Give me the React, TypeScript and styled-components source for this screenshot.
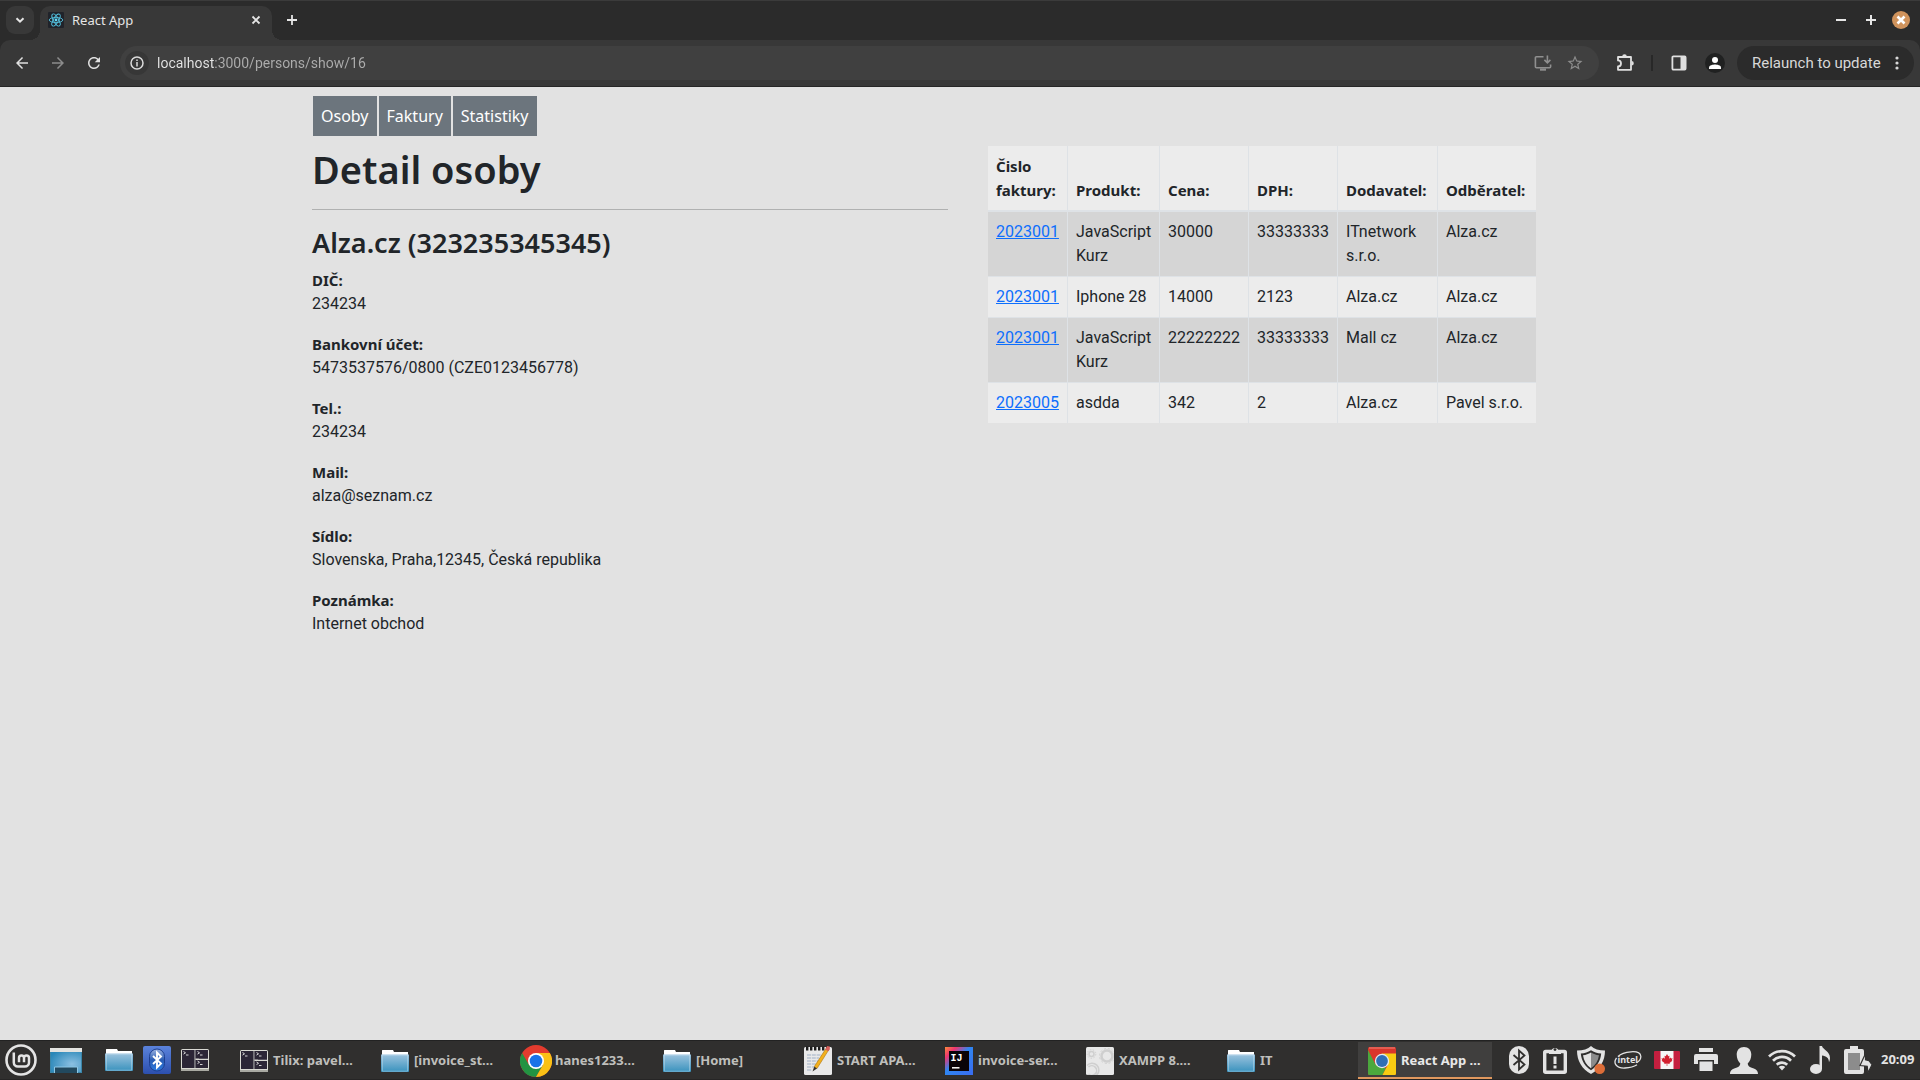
import React from 'react';
import styled, { createGlobalStyle, css } from 'styled-components';

const UI = '"Noto Sans", "Open Sans", sans-serif';
const BODY = 'Roboto, "Noto Sans", sans-serif';

const GlobalStyle = createGlobalStyle`
  *, *::before, *::after { box-sizing: border-box; }
  body { margin: 0; background: #e2e2e2; }
  button { font: inherit; color: inherit; border: 0; padding: 0; background: none; cursor: pointer; }
  svg { display: block; flex: none; }
`;

const Desktop = styled.div`
  display: flex;
  flex-direction: column;
  height: 100vh;
  overflow: hidden;
  font-family: ${BODY};
`;

/* ---------- browser frame ---------- */

const TabStrip = styled.header`
  display: flex;
  align-items: flex-start;
  flex: none;
  height: 40px;
  padding: 5px 10px 0 6px;
  background: #2b2b2b;
  border-top: 1px solid #3b3b3b;
  color: #e6e6e6;
  font: 400 13px/16px ${UI};
`;

const TabSearch = styled.button`
  display: grid;
  place-items: center;
  width: 28px;
  height: 28px;
  margin-right: 6px;
  border-radius: 9px;
  background: #383838;
`;

const Tab = styled.div`
  position: relative;
  display: flex;
  align-items: center;
  width: 232px;
  height: 34px;
  padding: 0 8px 6px;
  border-radius: 10px 10px 0 0;
  background: #383838;

  &::before, &::after {
    content: '';
    position: absolute;
    bottom: 0;
    width: 10px;
    height: 10px;
  }
  &::before { right: 100%; background: radial-gradient(circle at 0 0, transparent 10px, #383838 10px); }
  &::after { left: 100%; background: radial-gradient(circle at 100% 0, transparent 10px, #383838 10px); }
`;

const TabTitle = styled.span`
  flex: 1;
  margin-left: 8px;
`;

const StripButton = styled.button<{ $size?: number }>`
  display: grid;
  place-items: center;
  width: ${p => p.$size ?? 28}px;
  height: ${p => p.$size ?? 28}px;
`;

const NewTab = styled(StripButton)`
  margin-left: 6px;
`;

const WindowControls = styled.div`
  display: flex;
  align-items: center;
  gap: 12px;
  height: 28px;
  margin-left: auto;
`;

const Toolbar = styled.div`
  display: flex;
  align-items: center;
  flex: none;
  height: 47px;
  padding: 0 6px;
  background: #383838;
  border-bottom: 1px solid #262626;
  border-radius: 10px 10px 0 0;
  color: #dedede;
`;

const ToolbarWrap = styled.div`
  flex: none;
  background: #2b2b2b;
`;

const NavButtons = styled.div`
  display: flex;
  gap: 4px;
  margin-right: 10px;
`;

const ToolButton = styled.button<{ $dim?: boolean }>`
  display: grid;
  place-items: center;
  width: 32px;
  height: 32px;
  color: ${p => (p.$dim ? '#8c8c8c' : '#e0e0e0')};
`;

const AddressBar = styled.form`
  display: flex;
  align-items: center;
  flex: 1;
  height: 34px;
  padding: 0 8px 0 5px;
  margin-right: 10px;
  border-radius: 17px;
  background: #404040;
`;

const SiteInfo = styled.button`
  display: grid;
  place-items: center;
  width: 24px;
  height: 24px;
  border-radius: 50%;
  background: #373737;
`;

const Address = styled.input`
  flex: 1;
  min-width: 0;
  height: 24px;
  margin-left: 8px;
  padding: 0;
  border: 0;
  outline: 0;
  font: 400 14px/24px ${BODY};
  color: transparent;
  background: linear-gradient(to right, #e6e6e6 58px, #adadad 58px);
  background-clip: text;
`;

const Divider = styled.span`
  width: 2px;
  height: 16px;
  margin: 0 10px;
  background: #282828;
`;

const Avatar = styled.button`
  display: grid;
  place-items: center;
  width: 20px;
  height: 20px;
  margin: 0 12px 0 10px;
  border-radius: 50%;
  background: #202121;
  color: #fff;
`;

const Relaunch = styled.button`
  display: flex;
  align-items: center;
  justify-content: space-between;
  width: 177px;
  height: 34px;
  padding: 0 15px;
  border-radius: 17px;
  background: #2b2b2b;
  color: #d8d8d8;
  font: 400 15px/20px ${BODY};
`;

/* ---------- page ---------- */

const Viewport = styled.main`
  flex: 1;
  min-height: 0;
  overflow: auto;
  background: #e2e2e2;
  color: #212529;
  font: 400 16px/24px ${BODY};
`;

const Container = styled.div`
  max-width: 1320px;
  margin: 0 auto;
  padding: 8px 12px;
`;

const Menu = styled.ul`
  display: flex;
  gap: 2px;
  margin: 0 0 8px;
  padding: 1px;
  list-style: none;
`;

const MenuLink = styled.a`
  display: block;
  padding: 8px;
  background: #6c757d;
  color: #fff;
  font-family: ${UI};
  text-decoration: none;
`;

const Columns = styled.div`
  display: grid;
  grid-template-columns: 1fr 1fr;
  gap: 24px;
`;

const Title = styled.h1`
  margin: 0;
  font: 600 38px/48px ${UI};
`;

const Rule = styled.hr`
  margin: 16px 0;
  border: 0;
  border-top: 1px solid #b0b1b1;
`;

const Subtitle = styled.h3`
  margin: 0 0 8px;
  font: 600 27px/34px ${UI};
`;

const Details = styled.dl`
  margin: 0;
`;

const Term = styled.dt`
  font: 700 15px/24px ${UI};
`;

const Value = styled.dd`
  margin: 0 0 16px;
`;

const TablePane = styled.div`
  padding: 1px 0 0 16px;
`;

const Invoices = styled.table`
  table-layout: fixed;
  width: 548px;
  border-spacing: 0;
`;

const cell = css`
  padding: 8px;
  border-right: 1px solid #dee2e6;
  text-align: left;
  &:last-child { border-right: 0; }
`;

const HeadCell = styled.th`
  ${cell}
  border-bottom: 2px solid #dee2e6;
  background: #ececec;
  vertical-align: bottom;
  font: 700 15px/24px ${UI};
`;

const Cell = styled.td`
  ${cell}
  border-bottom: 1px solid #dee2e6;
  vertical-align: top;
`;

const Row = styled.tr`
  background: #ececec;
  &:nth-child(odd) { background: #d5d5d5; }
  &:last-child ${Cell} { border-bottom: 0; }
`;

const InvoiceLink = styled.a`
  color: #0d6efd;
  text-decoration: underline;
`;

/* ---------- taskbar ---------- */

const Taskbar = styled.footer`
  display: flex;
  flex: none;
  height: 40px;
  background: #302f2e;
  border-top: 1px solid #222;
  border-bottom: 1px solid #262525;
  color: #bfbfbc;
  font: 700 13px/18px ${UI};
`;

const Launchers = styled.nav`
  display: flex;
  margin-right: 16px;
`;

const Launcher = styled.button<{ $w?: number; $gap?: number }>`
  display: grid;
  place-items: center;
  width: ${p => p.$w ?? 38}px;
  margin-right: ${p => p.$gap ?? 0}px;
`;

const TaskList = styled.div`
  display: flex;
  flex: 1;
  gap: 7px;
  min-width: 0;
`;

const Task = styled.button<{ $active?: boolean }>`
  display: flex;
  align-items: center;
  gap: 5px;
  width: 134px;
  margin-top: 1px;
  padding: 0 10px;
  white-space: nowrap;
  ${p => p.$active && css`
    color: #e8e8e8;
    background: #403f3e;
    box-shadow: inset 0 -2px #e0985e;
  `}
`;

const TaskIcon = styled.span`
  display: flex;
  justify-content: center;
  flex: none;
  width: 28px;
`;

const TaskLabel = styled.span`
  padding-bottom: 2px;
`;

const Tray = styled.div`
  display: flex;
  align-items: center;
  padding-right: 3px;
  color: #e3e3e3;
`;

const TrayButton = styled.button<{ $w: number }>`
  display: grid;
  place-items: center;
  width: ${p => p.$w}px;
  height: 38px;
`;

const Clock = styled.time`
  margin-left: 4px;
  width: 36px;
  padding-bottom: 2px;
`;

/* ---------- icons ---------- */

const Glyph = ({ d, size = 18 }: { d: string; size?: number }) => (
  <svg width={size} height={size} viewBox="0 0 24 24" fill="currentColor"><path d={d} /></svg>
);

const BACK = 'M20 11H7.83l5.59-5.59L12 4l-8 8 8 8 1.41-1.41L7.83 13H20z';
const FORWARD = 'M12 4l-1.41 1.41L16.17 11H4v2h12.17l-5.58 5.59L12 20l8-8z';
const RELOAD = 'M17.65 6.35C16.2 4.9 14.21 4 12 4c-4.42 0-7.99 3.58-7.99 8s3.57 8 7.99 8c3.73 0 6.84-2.55 7.73-6h-2.08c-.82 2.33-3.04 4-5.65 4-3.31 0-6-2.69-6-6s2.69-6 6-6c1.66 0 3.14.69 4.22 1.78L13 11h7V4z';
const STAR = 'M22 9.24l-7.19-.62L12 2 9.19 8.63 2 9.24l5.46 4.73L5.82 21 12 17.27 18.18 21l-1.63-7.03zM12 15.4l-3.76 2.27 1-4.28-3.32-2.88 4.38-.38L12 6.1l1.71 4.04 4.38.38-3.32 2.88 1 4.28z';

const Line = ({ d, size, w = 2 }: { d: string; size: number; w?: number }) => (
  <svg width={size} height={size} viewBox={`0 0 ${size} ${size}`} fill="none" stroke="currentColor" strokeWidth={w}><path d={d} /></svg>
);

const ReactLogo = () => (
  <svg width="16" height="16" viewBox="0 0 16 16">
    <rect width="16" height="16" rx="1" fill="#20232a" />
    <g fill="none" stroke="#53c1de" strokeWidth="0.9">
      <ellipse cx="8" cy="8" rx="6.8" ry="2.6" />
      <ellipse cx="8" cy="8" rx="6.8" ry="2.6" transform="rotate(60 8 8)" />
      <ellipse cx="8" cy="8" rx="6.8" ry="2.6" transform="rotate(120 8 8)" />
    </g>
    <circle cx="8" cy="8" r="1.4" fill="#61dafb" />
  </svg>
);

const CloseWindowIcon = () => (
  <svg width="18" height="18" viewBox="0 0 18 18">
    <circle cx="9" cy="9" r="9" fill="#d0935c" />
    <path d="M5.5 5.5l7 7M12.5 5.5l-7 7" stroke="#fff" strokeWidth="2.6" />
  </svg>
);

const InfoIcon = () => (
  <svg width="14" height="14" viewBox="0 0 14 14" fill="none" stroke="#dcdcdc" strokeWidth="1.5">
    <circle cx="7" cy="7" r="6" /><path d="M7 6v4.4M7 3.4v1.7" />
  </svg>
);

const InstallIcon = () => (
  <svg width="18" height="18" viewBox="0 0 18 18" fill="none" stroke="#8f8f8f" strokeWidth="1.6">
    <path d="M9.5 2.8H2.4a1 1 0 0 0-1 1v9a1 1 0 0 0 1 1h13.2a1 1 0 0 0 1-1v-2.3" />
    <path d="M13.4 1.6v7M10.4 5.9l3 3 3-3" />
    <path d="M6 15.6h6" strokeWidth="2.2" />
  </svg>
);

const PuzzleIcon = () => (
  <svg width="18" height="18" viewBox="0 0 18 18" fill="none" stroke="currentColor" strokeWidth="1.8" strokeLinejoin="round">
    <path d="M2 3H15V15.800H2V12.400a3 3 0 0 0 0-6z" />
    <path d="M6.200 2.500a2.300 2.300 0 0 1 4.600 0zM15.500 7a2.300 2.300 0 0 1 0 4.600z" fill="currentColor" stroke="none" />
  </svg>
);

const SidePanelIcon = () => (
  <svg width="16" height="16" viewBox="0 0 16 16">
    <rect x="1.4" y="1.4" width="13.2" height="13.2" rx="1" fill="none" stroke="currentColor" strokeWidth="1.8" />
    <path d="M9.5 1.5H14.5V14.5H9.5z" fill="currentColor" />
  </svg>
);

const PersonIcon = () => (
  <svg width="14" height="14" viewBox="0 0 14 14" fill="currentColor">
    <circle cx="7" cy="4" r="3" /><path d="M1 13v-1.5C1 9.4 5 8.6 7 8.6s6 .8 6 2.9V13z" />
  </svg>
);

const DotsIcon = () => (
  <svg width="4" height="14" viewBox="0 0 4 14" fill="currentColor">
    <circle cx="2" cy="2" r="1.6" /><circle cx="2" cy="7" r="1.6" /><circle cx="2" cy="12" r="1.6" />
  </svg>
);

const MintIcon = () => (
  <svg width="32" height="32" viewBox="0 0 32 32" fill="none" stroke="#e4e4e4">
    <circle cx="16" cy="16" r="14.5" strokeWidth="2.6" />
    <path d="M8.8 8.4V18.5a4 4 0 0 0 4 4H20a4 4 0 0 0 4-4V14a2.5 2.5 0 0 0-5 0V18.3M19 14a2.5 2.5 0 0 0-5 0V18.3" strokeWidth="2.5" />
  </svg>
);

const DesktopIcon = () => (
  <svg width="32" height="28" viewBox="0 0 32 28">
    <defs>
      <radialGradient id="desk" cx=".7" cy=".6" r=".8"><stop offset="0" stopColor="#8cc0e2" /><stop offset="1" stopColor="#2a87b8" /></radialGradient>
    </defs>
    <rect y="2" width="32" height="25" fill="#3b86a8" />
    <rect x="1" y="6" width="30" height="20" fill="url(#desk)" />
    <rect width="32" height="4" y="2" fill="#e3e3e0" />
    <path d="M4.500 27v-6h23v6" fill="#22495e" stroke="#8ec6e4" />
  </svg>
);

const FolderIcon = () => (
  <svg width="28" height="24" viewBox="0 0 28 24">
    <defs>
      <linearGradient id="fold" x1="0" y1="0" x2="0" y2="1"><stop offset="0" stopColor="#9cc3de" /><stop offset="1" stopColor="#3992bd" /></linearGradient>
    </defs>
    <path d="M1 6V1.5Q1 1 1.5 1H12l1 2h14V7H1z" fill="#fff" />
    <path d="M0 5.5h28V22a1 1 0 0 1-1 1H1a1 1 0 0 1-1-1z" fill="url(#fold)" />
    <path d="M1 6.2h26M1.5 6v16.2h25V6" stroke="#d0e6f2" strokeOpacity=".5" strokeWidth=".8" fill="none" />
  </svg>
);

const BluetoothApp = () => (
  <svg width="28" height="28" viewBox="0 0 28 28">
    <defs>
      <linearGradient id="bt" x1="0" y1="0" x2="0" y2="1"><stop offset="0" stopColor="#5b83dc" /><stop offset="1" stopColor="#2c4fae" /></linearGradient>
      <linearGradient id="bt2" x1="0" y1="0" x2="0" y2="1"><stop offset="0" stopColor="#9db4e0" /><stop offset=".5" stopColor="#2a5cb4" /><stop offset="1" stopColor="#2b7be0" /></linearGradient>
    </defs>
    <rect width="28" height="28" rx="2" fill="url(#bt)" />
    <rect x="6.5" y="3" width="15" height="22" rx="7.5" fill="url(#bt2)" stroke="#1d3f92" />
    <path d="M10 10l8 7.5-4 4V6.5l4 4-8 7.5" fill="none" stroke="#fff" strokeWidth="1.9" />
  </svg>
);

const TilixIcon = () => (
  <svg width="28" height="24" viewBox="0 0 28 24">
    <rect y="1" width="28" height="22" rx="1.5" fill="#d9d9d3" />
    <path d="M1 2h12.5v18H1zM18 2h9v8.5h-9zM18 12h9v8h-9z" fill="#2b2536" />
    <path d="M13 2h1.500v18H13z" fill="#77757c" />
    <path d="M14.500 2H27v8.500H14.500zM14.500 12H27v8H14.500z" fill="#2b2536" />
    <path d="M2.5 3.5l2 1.3-2 1.3M5 7h2.5M16.5 3.5l2 1.3-2 1.3M19 7h2.5M16.5 13l2 1.3-2 1.3M19 16.5h2.5" fill="none" stroke="#e8e8e8" strokeWidth=".9" />
    <path d="M0 21h28v2H0z" fill="#a9a9a2" />
  </svg>
);

const ChromeRound = () => (
  <svg width="32" height="32" viewBox="-16 -16 32 32">
    <circle r="16" fill="#e33b2e" />
    <path d="M-13.86 -8A16 16 0 0 0 0 16L6.93 4L0 0L-6.93 4z" fill="#229342" />
    <path d="M13.86 -8A16 16 0 0 1 0 16L6.93 4L0 -8z" fill="#fbc116" />
    <circle r="8" fill="#fff" /><circle r="6.3" fill="#1a73e8" />
  </svg>
);

const ChromeSquare = () => (
  <svg width="28" height="28" viewBox="0 0 28 28">
    <rect width="28" height="28" rx="1.5" fill="#d9362b" />
    <path d="M0 3L7.5 17.5 14 20l4 1-3.5 7H1.5A1.5 1.5 0 0 1 0 26.5z" fill="#4ba83d" />
    <path d="M14 6.5H28v20a1.5 1.5 0 0 1-1.5 1.5H14.5L20 17.5z" fill="#f8cc12" />
    <path d="M1 1h26" stroke="#ee8379" />
    <circle cx="14" cy="14" r="7.2" fill="#e6ecef" /><circle cx="14" cy="14" r="5.9" fill="#2f6fb5" />
  </svg>
);

const NotepadIcon = () => (
  <svg width="28" height="28" viewBox="0 0 28 28" overflow="visible">
    <rect width="28" height="28" rx="1.5" fill="#e9e9e9" />
    <path d="M2 1.5h24" stroke="#1c1c1c" strokeWidth="4" strokeDasharray="2.4 1.6" />
    <path d="M3 8h14M3 11h12M3 14h13M3 17h9M3 20h10M3 23h5" stroke="#9fb0c6" strokeWidth="1.1" strokeDasharray="4 .8" />
    <path d="M22 1.5l2.6 1.6L13 21.5l-2.8-1.7z" fill="#f3b01c" stroke="#a9720c" strokeWidth=".6" />
    <path d="M10.2 19.8L8.5 24.5l4.5-3z" fill="#35302b" />
    <path d="M21.2 2.5L23-1l2.8.5v3L24 4.3z" fill="#d7605c" />
  </svg>
);

const IdeaIcon = () => (
  <svg width="28" height="28" viewBox="0 0 28 28">
    <defs>
      <linearGradient id="ij" x1="0" y1="0" x2="1" y2="1"><stop offset="0" stopColor="#fd8b3a" /><stop offset=".2" stopColor="#f0356f" /><stop offset=".45" stopColor="#2f86f2" /><stop offset="1" stopColor="#3a6cf0" /></linearGradient>
    </defs>
    <rect width="28" height="28" fill="url(#ij)" />
    <rect x="4" y="4" width="20" height="20" fill="#0a0408" />
    <text x="5.5" y="14" fill="#fff" fontFamily="Liberation Mono" fontWeight="700" fontSize="10">IJ</text>
    <path d="M7 20.8h7.5" stroke="#fff" strokeWidth="1.5" />
  </svg>
);

const GearsIcon = () => (
  <svg width="28" height="28" viewBox="0 0 28 28" fill="none" stroke="#cfcfcf">
    <rect width="28" height="28" rx="1.5" fill="#e8e8e8" stroke="none" />
    <circle cx="21" cy="9" r="5.5" strokeWidth="2.5" /><circle cx="21" cy="9" r="7.5" strokeDasharray="2 2" />
    <circle cx="5.5" cy="7" r="2.5" strokeWidth="1.5" /><circle cx="5.5" cy="7" r="4.3" strokeDasharray="1.5 1.5" />
    <path d="M1 18.5a6.8 6.8 0 1 1 0 9M2.5 20a4.8 4.8 0 1 1 0 7" strokeWidth="1.5" />
  </svg>
);

const TrayBluetooth = () => (
  <svg width="20" height="28" viewBox="0 0 20 28">
    <rect width="20" height="28" rx="10" fill="currentColor" />
    <path d="M4.5 9l11 9.5L10 23.5V4.5l5.5 5L4.5 19" fill="none" stroke="#302f2e" strokeWidth="1.8" />
  </svg>
);

const ClipboardIcon = () => (
  <svg width="24" height="28" viewBox="0 0 24 28">
    <rect x="1.7" y="5.5" width="20.6" height="20.8" rx="1" fill="none" stroke="currentColor" strokeWidth="3.4" />
    <path d="M6 8V5.5h2.5a3.5 3.5 0 0 1 7 0H18V8z" fill="currentColor" />
    <circle cx="12" cy="3.6" r="1.4" fill="#302f2e" />
    <path d="M12 10.5v7.5M12 19.5v3" stroke="currentColor" strokeWidth="3" />
  </svg>
);

const ShieldIcon = () => (
  <svg width="28" height="28" viewBox="0 0 28 28">
    <path d="M14 0c3 3 8 4.500 14 4.500C28 15 23 23 14 28 5 23 0 15 0 4.500 6 4.500 11 3 14 0z" fill="currentColor" />
    <path d="M14 4.2c3 2 6 3 10.2 3.4C23.5 15 20 20.500 14 24.300 8 20.500 4.500 15 3.800 7.600 8 7.200 11 6.200 14 4.200z" fill="#302f2e" />
    <path d="M14 6.4c-2.5 1.5-5 2.4-8 2.8.8 5.8 3.5 10 8 13z" fill="currentColor" />
    <path d="M14 6.4c2.5 1.5 5 2.4 8 2.8-.8 5.8-3.5 10-8 13z" fill="#8b8b8b" />
    <circle cx="22.7" cy="22.7" r="5.3" fill="#dd6d38" />
  </svg>
);

const IntelIcon = () => (
  <svg width="28" height="20" viewBox="0 0 28 20">
    <path d="M4 6.5C9 1.5 26 -1 26.8 6.2c.4 4-3.3 6-4.3 6.6M2.5 7.8C-1.5 13.5 3 18.5 11 18c5.5-.3 10-2 12-3.3" fill="none" stroke="currentColor" strokeWidth="1.3" />
    <text x="3.500" y="13.300" fill="currentColor" fontFamily="Noto Sans" fontWeight="700" fontSize="9">intel</text>
  </svg>
);

const FlagIcon = () => (
  <svg width="26" height="18" viewBox="0 0 26 18">
    <rect width="26" height="18" rx="1" fill="#c51f3f" /><path d="M6.5 0h13v18h-13z" fill="#f6f6f6" />
    <path d="M13 3l1.3 2.2 1.2-.5-.4 3.1 1.6-1.4.3 1 1.6-.1-.8 2 .6.5-2.9 2.2.2.9-2.4-.3V15h-.6v-2.4l-2.4.3.2-.9-2.9-2.2.6-.5-.8-2 1.6.1.3-1 1.6 1.4-.4-3.1 1.2.5z" fill="#d3202f" />
  </svg>
);

const PrinterIcon = () => (
  <svg width="24" height="24" viewBox="0 0 24 24" fill="currentColor">
    <path d="M5 0h14v4H5zM2 6h20a2 2 0 0 1 2 2v8h-4v-4H4v4H0V8a2 2 0 0 1 2-2zM5.5 13.5h13V23h-13z" />
  </svg>
);

const UserIcon = () => (
  <svg width="28" height="28" viewBox="0 0 28 28" fill="currentColor">
    <path d="M14 1c4.5 0 7.3 3 7.3 7.5 0 4-1.5 7-3.6 9 .2 2 1 3.3 4 4.2 4 1.2 6.3 2.5 6.3 6.300H0c0-3.800 2.300-5.100 6.300-6.300 3-.9 3.800-2.200 4-4.200-2.100-2-3.600-5-3.600-9C6.700 4 9.500 1 14 1z" />
  </svg>
);

const WifiIcon = () => (
  <svg width="28" height="22" viewBox="0 0 28 22" fill="none" stroke="currentColor" strokeWidth="2.7">
    <path d="M1 7.5a18.5 18.5 0 0 1 26 0M5 11.7a12.7 12.7 0 0 1 18 0M8.8 15.8a7.3 7.3 0 0 1 10.4 0" />
    <path d="M14 21.5l-3.2-3.4a4.6 4.6 0 0 1 6.4 0z" fill="currentColor" stroke="none" />
  </svg>
);

const NoteIcon = () => (
  <svg width="20" height="28" viewBox="0 0 20 28" fill="currentColor">
    <ellipse cx="6" cy="23" rx="6" ry="5" />
    <path d="M9.5 0H12c.5 3.5 8 5 8 12 0 1.5-.3 3-1 4.2 0-4.2-2.8-6.2-7-6.7V23H9.5z" />
  </svg>
);

const BatteryIcon = () => (
  <svg width="28" height="28" viewBox="0 0 28 28">
    <path d="M6 0h8v3h4a2 2 0 0 1 2 2v21a2 2 0 0 1-2 2H2a2 2 0 0 1-2-2V5a2 2 0 0 1 2-2h4z" fill="currentColor" />
    <path d="M4 7h12v17H4z" fill="#8c8c8c" />
    <path d="M21.5 7.5v6.2l3.5 1 3 4-4 8-.8-6.5-7.2-.7z" fill="currentColor" stroke="#302f2e" strokeWidth="1.2" />
  </svg>
);

/* ---------- data ---------- */

const details: [string, string][] = [
  ['DIČ:', '234234'],
  ['Bankovní účet:', '5473537576/0800 (CZE0123456778)'],
  ['Tel.:', '234234'],
  ['Mail:', 'alza@seznam.cz'],
  ['Sídlo:', 'Slovenska, Praha,12345, Česká republika'],
  ['Poznámka:', 'Internet obchod'],
];

const columns: [string, number][] = [
  ['Čislo faktury:', 80], ['Produkt:', 92], ['Cena:', 89], ['DPH:', 89], ['Dodavatel:', 100], ['Odběratel:', 98],
];

const invoices = [
  ['2023001', 'JavaScript Kurz', '30000', '33333333', 'ITnetwork s.r.o.', 'Alza.cz'],
  ['2023001', 'Iphone 28', '14000', '2123', 'Alza.cz', 'Alza.cz'],
  ['2023001', 'JavaScript Kurz', '22222222', '33333333', 'Mall cz', 'Alza.cz'],
  ['2023005', 'asdda', '342', '2', 'Alza.cz', 'Pavel s.r.o.'],
];

const tasks: { label: string; icon: React.ReactNode; active?: boolean }[] = [
  { label: 'Tilix: pavel…', icon: <TilixIcon /> },
  { label: '[invoice_st…', icon: <FolderIcon /> },
  { label: 'hanes1233…', icon: <ChromeRound /> },
  { label: '[Home]', icon: <FolderIcon /> },
  { label: 'START APA…', icon: <NotepadIcon /> },
  { label: 'invoice-ser…', icon: <IdeaIcon /> },
  { label: 'XAMPP 8.…', icon: <GearsIcon /> },
  { label: 'IT', icon: <FolderIcon /> },
  { label: 'React App …', icon: <ChromeSquare />, active: true },
];

const tray: [string, number, React.ReactNode][] = [
  ['Bluetooth', 36, <TrayBluetooth />],
  ['Reports', 36, <ClipboardIcon />],
  ['Updates', 36, <ShieldIcon />],
  ['Graphics', 38, <IntelIcon />],
  ['Keyboard layout', 40, <FlagIcon />],
  ['Printers', 38, <PrinterIcon />],
  ['User', 38, <UserIcon />],
  ['Network', 38, <WifiIcon />],
  ['Sound', 38, <NoteIcon />],
  ['Power', 38, <BatteryIcon />],
];

export default function App() {
  return (
    <Desktop>
      <GlobalStyle />
      <TabStrip>
        <TabSearch aria-label="Search tabs"><Line size={12} d="M2.5 4.2L6 7.7l3.5-3.5" /></TabSearch>
        <Tab>
          <ReactLogo />
          <TabTitle>React App</TabTitle>
          <StripButton $size={16} aria-label="Close tab"><Line size={10} w={1.8} d="M1.5 1.5l7 7M8.5 1.5l-7 7" /></StripButton>
        </Tab>
        <NewTab aria-label="New tab"><Line size={12} w={1.8} d="M6 1v10M1 6h10" /></NewTab>
        <WindowControls>
          <StripButton $size={18} aria-label="Minimize"><Line size={10} d="M0 5h10" /></StripButton>
          <StripButton $size={18} aria-label="Maximize"><Line size={10} d="M0 5h10M5 0v10" /></StripButton>
          <StripButton $size={18} aria-label="Close"><CloseWindowIcon /></StripButton>
        </WindowControls>
      </TabStrip>

      <ToolbarWrap>
        <Toolbar>
          <NavButtons>
            <ToolButton aria-label="Back"><Glyph d={BACK} /></ToolButton>
            <ToolButton $dim aria-label="Forward"><Glyph d={FORWARD} /></ToolButton>
            <ToolButton aria-label="Reload"><Glyph d={RELOAD} /></ToolButton>
          </NavButtons>
          <AddressBar>
            <SiteInfo type="button" aria-label="Site information"><InfoIcon /></SiteInfo>
            <Address aria-label="Address" defaultValue="localhost:3000/persons/show/16" />
            <ToolButton type="button" $dim aria-label="Install"><InstallIcon /></ToolButton>
            <ToolButton type="button" $dim aria-label="Bookmark"><Glyph d={STAR} /></ToolButton>
          </AddressBar>
          <ToolButton aria-label="Extensions"><PuzzleIcon /></ToolButton>
          <Divider />
          <ToolButton aria-label="Side panel"><SidePanelIcon /></ToolButton>
          <Avatar aria-label="Profile"><PersonIcon /></Avatar>
          <Relaunch>Relaunch to update <DotsIcon /></Relaunch>
        </Toolbar>
      </ToolbarWrap>

      <Viewport>
        <Container>
          <nav>
            <Menu>
              {['Osoby', 'Faktury', 'Statistiky'].map(item => (
                <li key={item}><MenuLink href="#">{item}</MenuLink></li>
              ))}
            </Menu>
          </nav>
          <Columns>
            <section>
              <Title>Detail osoby</Title>
              <Rule />
              <Subtitle>Alza.cz (323235345345)</Subtitle>
              <Details>
                {details.map(([term, value]) => (
                  <React.Fragment key={term}><Term>{term}</Term><Value>{value}</Value></React.Fragment>
                ))}
              </Details>
            </section>
            <TablePane>
              <Invoices>
                <colgroup>{columns.map(([name, width]) => <col key={name} width={width} />)}</colgroup>
                <thead><tr>{columns.map(([name]) => <HeadCell key={name} scope="col">{name}</HeadCell>)}</tr></thead>
                <tbody>
                  {invoices.map(([number, ...rest], i) => (
                    <Row key={i}>
                      <Cell><InvoiceLink href="#">{number}</InvoiceLink></Cell>
                      {rest.map((value, j) => <Cell key={j}>{value}</Cell>)}
                    </Row>
                  ))}
                </tbody>
              </Invoices>
            </TablePane>
          </Columns>
        </Container>
      </Viewport>

      <Taskbar>
        <Launchers>
          <Launcher $w={42} aria-label="Menu"><MintIcon /></Launcher>
          <Launcher $w={48} $gap={10} aria-label="Show desktop"><DesktopIcon /></Launcher>
          <Launcher aria-label="Files"><FolderIcon /></Launcher>
          <Launcher aria-label="Bluetooth"><BluetoothApp /></Launcher>
          <Launcher aria-label="Tilix"><TilixIcon /></Launcher>
        </Launchers>
        <TaskList>
          {tasks.map(({ label, icon, active }) => (
            <Task key={label} $active={active}><TaskIcon>{icon}</TaskIcon><TaskLabel>{label}</TaskLabel></Task>
          ))}
        </TaskList>
        <Tray>
          {tray.map(([label, width, icon]) => <TrayButton key={label} $w={width} aria-label={label}>{icon}</TrayButton>)}
          <Clock>20:09</Clock>
        </Tray>
      </Taskbar>
    </Desktop>
  );
}
